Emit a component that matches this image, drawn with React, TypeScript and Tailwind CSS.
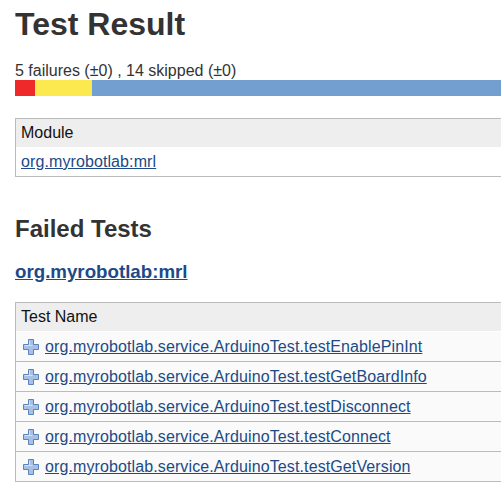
import React from "react";

const tests = [
  "org.myrobotlab.service.ArduinoTest.testEnablePinInt",
  "org.myrobotlab.service.ArduinoTest.testGetBoardInfo",
  "org.myrobotlab.service.ArduinoTest.testDisconnect",
  "org.myrobotlab.service.ArduinoTest.testConnect",
  "org.myrobotlab.service.ArduinoTest.testGetVersion",
];

function PlusIcon() {
  return (
    <svg width="16" height="16" viewBox="0 0 16 16" className="shrink-0">
      <path
        d="M5.5 0.5 H10.5 V5.5 H15.5 V10.5 H10.5 V15.5 H5.5 V10.5 H0.5 V5.5 H5.5 Z"
        fill="#a7c0e4"
        stroke="#5a82bd"
        strokeWidth="1"
      />
      <path d="M6.5 6.5 H9.5 M6.5 1.5 V6.5 M1.5 6.5 H6.5" stroke="#d6e3f4" strokeWidth="1" fill="none" />
    </svg>
  );
}

export default function App() {
  return (
    <div
      className="w-[501px] h-[502px] overflow-hidden bg-white text-[#333] pl-[15px]"
      style={{ fontFamily: '"Liberation Sans", Arial, sans-serif' }}
    >
      <h1 className="mt-[6px] h-[37px] leading-[37px] text-[32px] font-bold whitespace-nowrap">
        Test Result
      </h1>
      <div className="mt-[19px] h-[18px] leading-[18px] text-[16px] whitespace-nowrap">
        5 failures (±0) , 14 skipped (±0)
      </div>
      <div className="flex h-[16px] w-[700px]">
        <div className="w-[20px] bg-[#ef2929]" />
        <div className="w-[57px] bg-[#fce94f]" />
        <div className="flex-1 bg-[#729fcf]" />
      </div>

      <div className="mt-[22px] w-[700px] border border-[#bbb] text-[16px]">
        <div className="h-[29px] leading-[28px] bg-[#eee] border-b border-white pl-[5px] text-[#111]">
          Module
        </div>
        <div className="h-[28px] leading-[28px] pl-[5px]">
          <a href="#" className="text-[#204a87] underline tracking-[0.1px]">
            org.myrobotlab:mrl
          </a>
        </div>
      </div>

      <h2 className="mt-[38px] h-[28px] leading-[28px] text-[24px] font-bold whitespace-nowrap">
        Failed Tests
      </h2>
      <h3 className="mt-[18px] h-[22px] leading-[22px] text-[18.72px] font-bold whitespace-nowrap">
        <a href="#" className="text-[#204a87] underline">
          org.myrobotlab:mrl
        </a>
      </h3>

      <div className="mt-[19px] w-[700px] border border-[#bbb] text-[16px]">
        <div className="h-[29px] leading-[28px] bg-[#eee] border-b border-white pl-[5px] text-[#111]">
          Test Name
        </div>
        {tests.map((t, i) => (
          <div
            key={t}
            className={
              "flex items-center pl-[7px] gap-[6px] bg-[#fafafa] " +
              (i < tests.length - 1 ? "h-[30px] border-b border-[#bbb]" : "h-[29px]")
            }
          >
            <PlusIcon />
            <a href="#" className="leading-[29px] text-[#204a87] underline whitespace-nowrap tracking-[0.11px]">
              {t}
            </a>
          </div>
        ))}
      </div>
    </div>
  );
}
